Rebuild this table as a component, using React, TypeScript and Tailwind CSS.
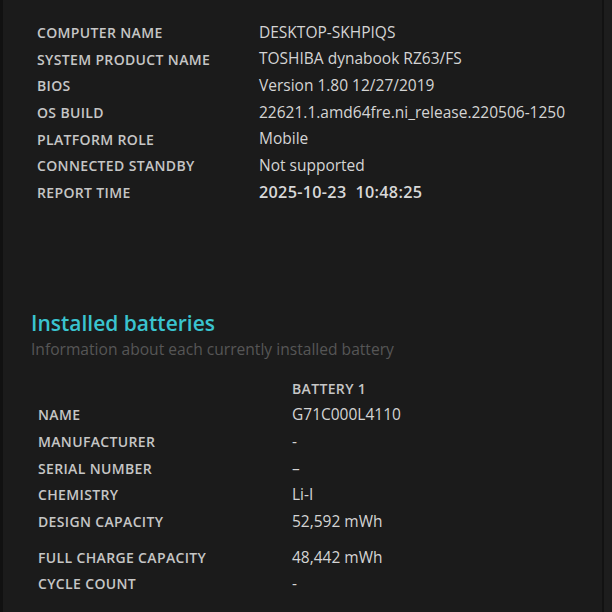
import React from 'react';

const systemRows: [string, string][] = [
  ['COMPUTER NAME', 'DESKTOP-SKHPIQS'],
  ['SYSTEM PRODUCT NAME', 'TOSHIBA dynabook RZ63/FS'],
  ['BIOS', 'Version 1.80 12/27/2019'],
  ['OS BUILD', '22621.1.amd64fre.ni_release.220506-1250'],
  ['PLATFORM ROLE', 'Mobile'],
  ['CONNECTED STANDBY', 'Not supported'],
];

const batteryRows: [string, string][] = [
  ['NAME', 'G71C000L4110'],
  ['MANUFACTURER', '-'],
  ['SERIAL NUMBER', '–'],
  ['CHEMISTRY', 'Li-I'],
  ['DESIGN CAPACITY', '52,592 mWh'],
];

const font = { fontFamily: '"Open Sans", "Noto Sans", sans-serif' };

function Label({ children, width }: { children: React.ReactNode; width: string }) {
  return <div className={`${width} shrink-0 text-[14px] font-semibold tracking-[0.35px] text-[#c6c6c6]`}>{children}</div>;
}

function Row({ label, value, labelWidth }: { label: string; value: string; labelWidth: string }) {
  return (
    <div className="flex items-center h-[26.7px]">
      <Label width={labelWidth}>{label}</Label>
      <div className="text-[15.5px] text-[#d4d4d4]">{value}</div>
    </div>
  );
}

export default function App() {
  return (
    <div className="w-[612px] h-[612px] flex bg-[#1b1b1b] overflow-hidden" style={font}>
      <div className="w-[3px] bg-[#111111]" />
      <div className="flex-1 flex flex-col">
        <div className="pt-[19px] pl-[34px]">
          {systemRows.map(([l, v]) => (
            <Row key={l} label={l} value={v} labelWidth="w-[222px]" />
          ))}
          <div className="flex items-center h-[26.7px]">
            <Label width="w-[222px]">REPORT TIME</Label>
            <div className="flex gap-[9px] text-[16.2px] font-semibold text-[#d8d8d8] tracking-[0.3px]">
              <span>2025-10-23</span>
              <span>10:48:25</span>
            </div>
          </div>
        </div>

        <div className="pl-[28px] mt-[104px]">
          <h2 className="text-[21px] leading-[26px] font-semibold text-[#3ac4cf]">Installed batteries</h2>
          <p className="text-[15.6px] leading-[26px] text-[#565656]">Information about each currently installed battery</p>
        </div>

        <div className="pl-[35px] mt-[13px]">
          <div className="flex items-center h-[26.7px]">
            <div className="w-[254px] shrink-0" />
            <Label width="">BATTERY 1</Label>
          </div>
          {batteryRows.map(([l, v]) => (
            <Row key={l} label={l} value={v} labelWidth="w-[254px]" />
          ))}
          <div className="h-[9px]" />
          <Row label="FULL CHARGE CAPACITY" value="48,442 mWh" labelWidth="w-[254px]" />
          <Row label="CYCLE COUNT" value="-" labelWidth="w-[254px]" />
        </div>
      </div>
      <div className="w-[2px] bg-[#121212]" />
      <div className="w-[8px] bg-[#1d1d1d]" />
    </div>
  );
}
